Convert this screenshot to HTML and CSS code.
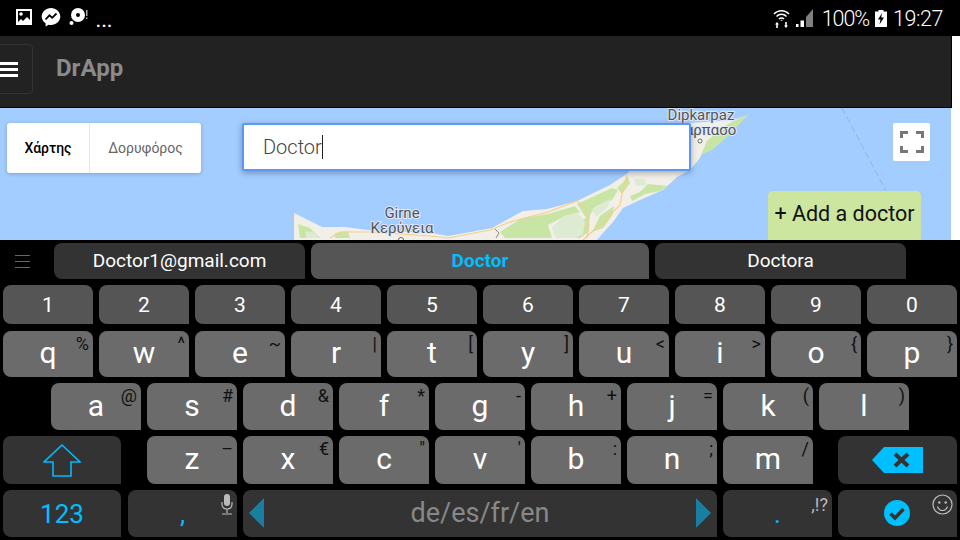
FILE: index.html
```html
<!DOCTYPE html>
<html lang="en">
<head>
  <meta charset="UTF-8" />
  <meta name="viewport" content="width=device-width, initial-scale=1" />
  <title>DrApp</title>
  <link rel="stylesheet" href="styles.css">
</head>
<body>

<div class="status">
  <div class="status-left">
    <svg width="18" height="18" viewBox="0 0 18 18"><path fill="#fff" d="M1 1h16v16H1z"/><path fill="#000" d="M3 3h12v9l-3-3-4 4-2-2-3 3z"/><circle cx="6" cy="6" r="1.800" fill="#fff"/></svg>
    <svg width="20" height="20" viewBox="0 0 20 20"><path fill="#fff" d="M10 1c5 0 9.300 3.700 9.300 8.500S15 18 10 18c-.9 0-1.700-.1-2.500-.3L4.600 19.500V16.300C2.200 14.700.7 12.300.7 9.500.7 4.700 5 1 10 1z"/><path fill="none" stroke="#000" stroke-width="1.800" d="M4.500 12.500l4-4.200 2.700 2.500 4.300-4.300"/></svg>
    <svg width="19" height="20" viewBox="0 0 19 20"><circle cx="9" cy="8" r="7" fill="#fff"/><circle cx="9" cy="8" r="2" fill="#000"/><circle cx="2.500" cy="16" r="2" fill="#fff"/><path fill="#aaa" d="M17 3h1.500v6H17zM17 10.500h1.500V12H17z"/></svg>
    <span class="dots">...</span>
  </div>
  <div class="status-right">
    <svg width="17" height="19" viewBox="0 0 17 19"><path fill="none" stroke="#fff" stroke-width="1.500" d="M1 5c4-4.500 11-4.500 15 0M3.500 7.500c2.700-3 7.300-3 10 0M6 10c1.300-1.400 3.700-1.400 5 0"/><path fill="#fff" d="M8.500 10.500l1.200 1.200h-2.400zM4 13l2 2.500H4.800V19H3.200v-3.500H2zM13 19l-2-2.500h1.200V13h1.600v3.500H15z"/></svg>
    <svg class="signal" width="18" height="18" viewBox="0 0 18 18"><path fill="#808080" d="M10 8L17 0V18H10z"/><path fill="#fff" d="M0 18v-3h2.500v3zM4.500 18v-6.500H8V18z"/></svg>
    <span class="pct">100%</span>
    <svg class="batt" width="12" height="17" viewBox="0 0 12 17"><path fill="#fff" d="M3.500 0h5v1.500H12V17H0V1.500h3.500z"/><path fill="#000" d="M7 3L3 9.500h2.500L4.500 14.500 9 7.500H6.200z"/></svg>
    <span class="clock">19:27</span>
  </div>
</div>

<div class="page">
  <nav class="navbar">
    <button class="toggle"><span></span><span></span><span></span></button>
    <span class="brand">DrApp</span>
  </nav>

  <div class="map">
    <svg class="map-bg" width="951" height="132" viewBox="0 108 951 132">
      <path class="sea-line" d="M842 108L912 240"/>
      <g class="terrain">
        <path class="land" d="M294 213L308 220 322 227 345 227 368 230 432 233 448 236 465 233 492 228 510 218 523 211 547 209 577 201 610 185 628 173 657 123 690 123 733 120 748 115 733 122 717 132 707 142 700 158 690 170 677 177 663 190 640 200 623 208 613 222 603 233 597 240 294 240z"/>
        <path class="green" d="M748 115L733 121 718 131 707 141 701 155 712 150 727 137z"/>
        <path class="green" d="M298 224L310 228 320 238 300 238zM335 233L348 231 350 238 335 238z"/>
        <path class="green" d="M500 232L522 218 548 214 575 206 580 212 565 216 548 225 552 238 505 238z"/>
        <path class="green" d="M577 204L612 188 618 190 612 200 596 206 590 215 588 232 580 238 565 238 572 225 586 218z"/>
        <path class="green" d="M600 216L614 206 612 216 603 228 592 232z"/>
        <path class="green" d="M617 188L628 177 630 183 622 194zM630 196L640 192 648 184 668 186 660 191 645 194 632 201z"/>
        <path class="pale" d="M563 216L578 213 585 222 583 234 576 238 556 238 552 228z"/>
        <path class="pale" d="M592 209L610 199 608 207 596 217zM634 179L645 179 646 185 636 186zM305 231L316 233 318 238 306 238z"/>
        <path class="road" d="M330 238L340 232 370 232 430 236 448 238 490 230 510 222 548 212 577 201 585 208 589 225 587 238"/>
        <path class="road" d="M627 175L623 190 620 205 610 215 592 232 583 240"/>
        <path class="border" d="M495 229L499 233 496 238"/>
      </g>
      <text class="place" x="402" y="218">Girne</text>
      <text class="place" x="402" y="233">Κερύνεια</text>
      <circle class="dot" cx="401" cy="240" r="2.500"/>
      <text class="place" x="701" y="120">Dipkarpaz</text>
      <text class="place" x="706" y="135">Καρπασο</text>
      <circle class="dot" cx="700" cy="141" r="2"/>
    </svg>

    <div class="map-type">
      <span class="map-tab on">Χάρτης</span>
      <span class="map-tab">Δορυφόρος</span>
    </div>

    <div class="search"><span>Doctor</span><i class="caret"></i></div>

    <div class="fullscreen">
      <svg width="24" height="22" viewBox="0 0 24 22"><path fill="none" stroke="#777" stroke-width="3" d="M1.500 7V1.500H8M16 1.500h6.500V7M1.500 15v5.500H8M16 20.500h6.500V15"/></svg>
    </div>

    <button class="add">+ Add a doctor</button>
  </div>
</div>

<div class="keyboard">
  <div class="suggest">
    <span class="menu"><i></i><i></i><i></i></span>
    <span class="chip w1">Doctor1@gmail.com</span>
    <span class="chip w2 active">Doctor</span>
    <span class="chip w1">Doctora</span>
  </div>

  <div class="row nums">
    <span class="key num">1</span><span class="key num">2</span><span class="key num">3</span><span class="key num">4</span><span class="key num">5</span>
    <span class="key num">6</span><span class="key num">7</span><span class="key num">8</span><span class="key num">9</span><span class="key num">0</span>
  </div>

  <div class="row r2">
    <span class="key">q<b>%</b></span><span class="key">w<b>^</b></span><span class="key">e<b>~</b></span><span class="key">r<b>|</b></span><span class="key">t<b>[</b></span>
    <span class="key">y<b>]</b></span><span class="key">u<b>&lt;</b></span><span class="key">i<b>&gt;</b></span><span class="key">o<b>{</b></span><span class="key">p<b>}</b></span>
  </div>

  <div class="row r3">
    <span class="key">a<b>@</b></span><span class="key">s<b>#</b></span><span class="key">d<b>&amp;</b></span><span class="key">f<b>*</b></span><span class="key">g<b>-</b></span>
    <span class="key">h<b>+</b></span><span class="key">j<b>=</b></span><span class="key">k<b>(</b></span><span class="key">l<b>)</b></span>
  </div>

  <div class="row r4">
    <span class="key fn shift">
      <svg width="38" height="33" viewBox="0 0 38 33"><path fill="none" stroke="#0bf" stroke-width="1.600" d="M19 1L37 18H28V32H10V18H1z"/></svg>
    </span>
    <span class="key">z<b>–</b></span><span class="key">x<b>€</b></span><span class="key">c<b>"</b></span><span class="key">v<b>'</b></span>
    <span class="key">b<b>:</b></span><span class="key">n<b>;</b></span><span class="key">m<b>/</b></span>
    <span class="key fn back">
      <svg width="51" height="26" viewBox="0 0 51 26"><path fill="#00bfff" d="M0 13L12 0H51V26H12z"/><path stroke="#333" stroke-width="4" d="M23 7L36 19M36 7L23 19"/></svg>
    </span>
  </div>

  <div class="row r5">
    <span class="key fn w118 cyan">123</span>
    <span class="key fn w109 cyan">,
      <svg class="mic" width="12" height="21" viewBox="0 0 12 21"><rect x="3" y="0" width="6" height="12" rx="3" fill="#bbb"/><path fill="none" stroke="#bbb" stroke-width="1.200" d="M1 8v2c0 3 2 5 5 5s5-2 5-5V8M6 15v4M1 20h10"/></svg>
    </span>
    <span class="key fn space">
      <i class="tri left"></i>
      <span>de/es/fr/en</span>
      <i class="tri right"></i>
    </span>
    <span class="key fn w109 cyan">.<em class="punct">,!?</em></span>
    <span class="key fn w119 enter">
      <svg width="26" height="26" viewBox="0 0 26 26"><circle cx="13" cy="13" r="13" fill="#00bfff"/><path fill="none" stroke="#333" stroke-width="3.500" d="M6.500 13.500l4.500 4.500 8.500-9"/></svg>
      <svg class="smile" width="21" height="21" viewBox="0 0 21 21"><circle cx="10.500" cy="10.500" r="9.500" fill="none" stroke="#bbb" stroke-width="1.200"/><circle cx="7.300" cy="8.500" r="1.200" fill="#bbb"/><circle cx="13.700" cy="8.500" r="1.200" fill="#bbb"/><path fill="none" stroke="#bbb" stroke-width="1.200" d="M5.500 12.500c1 3 3 4 5 4s4-1 5-4"/></svg>
    </span>
  </div>
</div>

</body>
</html>
```

FILE: styles.css
```css
html, body {
  margin: 0;
  padding: 0;
}
body {
  width: 960px;
  height: 540px;
  overflow: hidden;
  background: #fff;
  font-family: 'Roboto', 'Liberation Sans', sans-serif;
}

/* status bar */
.status {
  height: 36px;
  background: #000;
  color: #fff;
  display: flex;
  justify-content: space-between;
  align-items: center;
}
.status-left {
  display: flex;
  align-items: center;
  gap: 8px;
  padding: 0 0 3px 15px;
}
.dots {
  font-size: 16px;
  font-weight: 700;
  letter-spacing: 1px;
  margin-top: 9px;
}
.status-right {
  display: flex;
  align-items: center;
  padding-right: 17px;
}
.signal {
  margin-left: 6px;
}
.pct {
  font-size: 21.500px;
  font-weight: 300;
  letter-spacing: -1.100px;
  margin-left: 8px;
}
.batt {
  margin-left: 6px;
}
.clock {
  font-size: 21.500px;
  font-weight: 300;
  letter-spacing: -0.450px;
  margin-left: 6px;
}

/* app */
.page {
  height: 204px;
  width: 952px;
  display: flex;
  flex-direction: column;
}
.navbar {
  height: 71px;
  box-sizing: content-box;
  background: #222;
  border-right: 1px solid #000;
  border-bottom: 1px solid #000;
  display: flex;
  align-items: center;
  flex: none;
  padding-bottom: 0;
}
.toggle {
  width: 50px;
  height: 50px;
  margin: -5px 0 0 -17px;
  background: none;
  border: 1px solid #333;
  border-radius: 4px;
  display: flex;
  flex-direction: column;
  align-items: flex-end;
  justify-content: center;
  gap: 3px;
  padding: 0 14px 0 0;
}
.toggle span {
  display: block;
  width: 22px;
  height: 3px;
  background: #fff;
}
.brand {
  color: #8a8a8a;
  font-size: 24px;
  font-weight: 700;
  margin: -7px 0 0 23px;
}

/* map */
.map {
  position: relative;
  width: 951px;
  height: 132px;
  background: #a3ccff;
  overflow: hidden;
}
.map-bg {
  position: absolute;
  left: 0;
  top: 0;
}
.terrain {
  filter: blur(0.5px);
}
.land {
  fill: #f2efe9;
}
.green {
  fill: #c9e5a5;
}
.pale {
  fill: #dcebd2;
}
.road {
  fill: none;
  stroke: #f3d08a;
  stroke-width: 1.200;
}
.border {
  fill: none;
  stroke: #8a8a8a;
  stroke-width: 1;
}
.sea-line {
  fill: none;
  stroke: #8cb6f2;
  stroke-width: 1;
  stroke-dasharray: 7 3;
}
.place {
  font-size: 15px;
  fill: #555;
  text-anchor: middle;
  stroke: #dfeafc;
  stroke-width: 2;
  paint-order: stroke;
}
.dot {
  fill: #fff;
  stroke: #666;
  stroke-width: 1;
}
.map-type {
  position: absolute;
  left: 7px;
  top: 15px;
  width: 194px;
  height: 50px;
  background: #fff;
  border-radius: 3px;
  box-shadow: 0 1px 4px rgba(0, 0, 0, 0.2);
  display: flex;
  font-size: 14px;
}
.map-tab {
  display: flex;
  align-items: center;
  justify-content: center;
  flex: 1;
  color: #666;
}
.map-tab.on {
  flex: none;
  width: 82px;
  color: #000;
  font-weight: 500;
  border-right: 1px solid #e6e6e6;
}
.search {
  position: absolute;
  left: 242px;
  top: 15px;
  width: 449px;
  height: 48px;
  box-sizing: border-box;
  background: #fff;
  border: 2px solid #5b97f5;
  border-radius: 2px;
  box-shadow: 0 2px 6px rgba(0, 0, 0, 0.3);
  display: flex;
  align-items: center;
  padding-left: 19px;
  font-size: 20px;
  font-weight: 300;
  color: #444;
}
.caret {
  display: block;
  width: 1px;
  height: 24px;
  background: #222;
}
.fullscreen {
  position: absolute;
  left: 893px;
  top: 15px;
  width: 37px;
  height: 38px;
  background: #fff;
  border-radius: 2px;
  display: flex;
  align-items: center;
  justify-content: center;
}
.add {
  position: absolute;
  left: 768px;
  top: 83px;
  width: 153px;
  height: 60px;
  padding: 8px 0 22px;
  background: #cde69f;
  border: none;
  border-radius: 5px;
  font-family: inherit;
  font-size: 21.500px;
  color: #111;
  text-align: center;
  line-height: 30px;
}

/* keyboard */
.keyboard {
  height: 300px;
  box-sizing: border-box;
  background: #000;
  padding: 3px 3px 0;
  color: #fff;
}
.suggest {
  display: flex;
  gap: 6px;
  height: 36px;
  font-size: 19px;
  position: relative;
  padding-left: 51px;
}
.menu {
  position: absolute;
  left: 12px;
  top: 12px;
  width: 15px;
  display: flex;
  flex-direction: column;
  gap: 5px;
}
.menu i {
  display: block;
  height: 1px;
  background: #666;
}
.chip {
  background: #333;
  border-radius: 8px 8px 0 8px;
  display: flex;
  align-items: center;
  justify-content: center;
  padding-bottom: 1px;
  box-sizing: border-box;
}
.w1 {
  width: 251px;
}
.w2 {
  width: 338px;
}
.chip.active {
  background: #555;
  color: #00bfff;
  font-weight: 700;
}
.row {
  display: flex;
  gap: 6px;
  margin-top: 6px;
}
.nums {
  height: 39px;
}
.r2 {
  height: 46px;
  margin-top: 7px;
}
.r3 {
  height: 47px;
  padding-left: 48px;
}
.r4 {
  height: 48px;
}
.r5 {
  height: 47px;
}
.key {
  position: relative;
  width: 90px;
  flex: none;
  box-sizing: border-box;
  background: #6b6b6b;
  border-radius: 8px 8px 0 8px;
  display: flex;
  align-items: center;
  justify-content: center;
  font-size: 30px;
  line-height: 1;
  padding-bottom: 2px;
}
.key.num {
  background: #555;
  font-size: 21px;
  padding: 1px 0 0;
}
.key b {
  position: absolute;
  right: 4px;
  top: 4px;
  font-size: 18px;
  font-weight: 400;
  line-height: 18px;
  color: #111;
}
.key.fn {
  background: #333;
  padding-bottom: 0;
}
.shift {
  width: 118px;
  margin-right: 20px;
}
.back {
  width: 119px;
  margin-left: 19px;
}
.w118 {
  width: 118px;
}
.w109 {
  width: 109px;
}
.w119 {
  width: 119px;
}
.r5 .w118 {
  margin-right: 1px;
}
.enter {
  padding-right: 2px;
}
.key.enter {
  padding-bottom: 2px;
}
.cyan {
  color: #00bfff;
  font-size: 26px;
}
.mic {
  position: absolute;
  right: 4px;
  top: 4px;
}
.punct {
  position: absolute;
  right: 4px;
  top: 6px;
  font-style: normal;
  font-size: 18px;
  color: #bbb;
}
.smile {
  position: absolute;
  right: 4px;
  top: 4px;
}
.space {
  width: 474px;
  color: #888;
  font-size: 27px;
}
.tri {
  position: absolute;
  top: 8px;
  width: 0;
  height: 0;
  border-top: 15px solid transparent;
  border-bottom: 15px solid transparent;
}
.tri.left {
  left: 6px;
  border-right: 15px solid #1a7ea0;
}
.tri.right {
  right: 6px;
  border-left: 15px solid #1a7ea0;
}
```
